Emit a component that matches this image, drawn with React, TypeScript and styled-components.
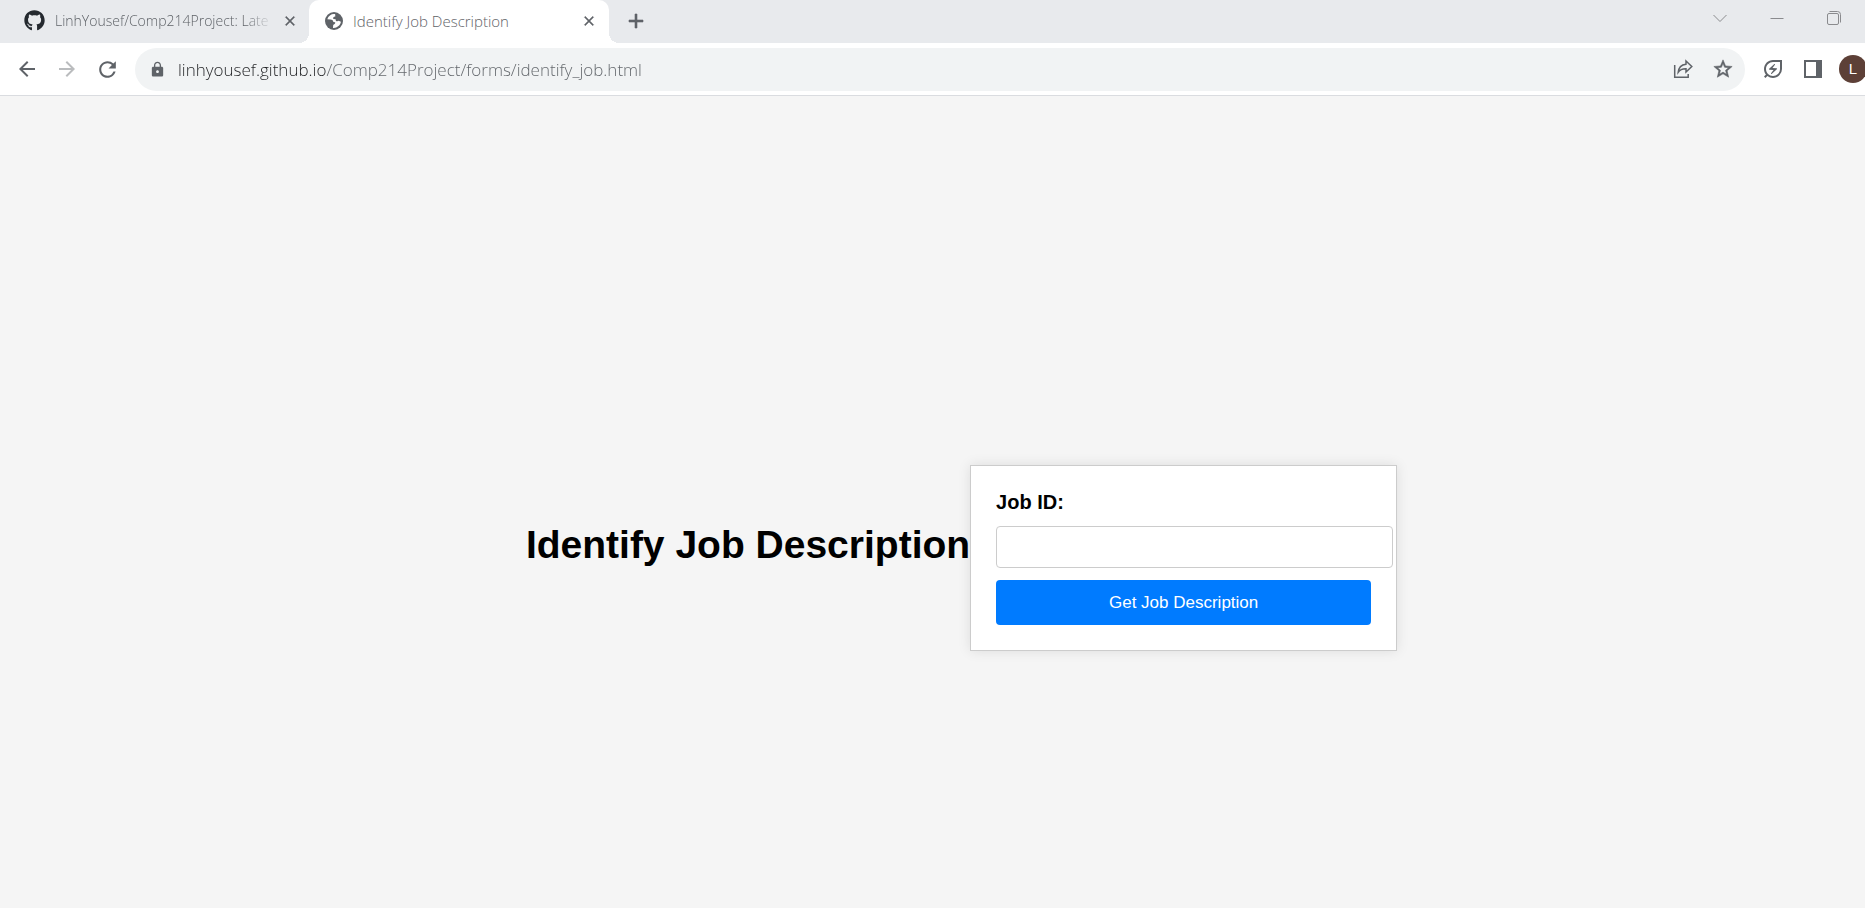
import React, { useState } from "react";
import styled, { createGlobalStyle } from "styled-components";
import {
  MdAdd,
  MdArrowBack,
  MdArrowForward,
  MdClose,
  MdLock,
  MdOutlineEnergySavingsLeaf,
  MdRefresh,
  MdStarBorder,
} from "react-icons/md";
import { FaGithub } from "react-icons/fa";

const GlobalStyle = createGlobalStyle`
  *, *::before, *::after { box-sizing: border-box; }
  body {
    margin: 0;
    background: #f5f5f5;
    font-family: "Liberation Sans", Arial, sans-serif;
  }
  svg { display: block; flex: none; }
`;

const Window = styled.div`
  display: flex;
  flex-direction: column;
  min-height: 100vh;
  overflow: hidden;
`;

const TabStrip = styled.div`
  display: flex;
  height: 43px;
  background: #e8eaed;
  color: #5f6368;
`;

const Tab = styled.div<{ $active?: boolean }>`
  position: relative;
  display: flex;
  align-items: center;
  width: ${(p) => (p.$active ? 300 : 309)}px;
  padding: 0 ${(p) => (p.$active ? "12px 2px 16px" : "11px 2px 24px")};
  border-radius: 10px 10px 0 0;
  background: ${(p) => (p.$active ? "#fff" : "transparent")};

  &::before,
  &::after {
    content: "";
    display: ${(p) => (p.$active ? "block" : "none")};
    position: absolute;
    bottom: 0;
    width: 10px;
    height: 10px;
  }
  &::before {
    left: -10px;
    background: radial-gradient(circle at 0 0, transparent 10px, #fff 10px);
  }
  &::after {
    right: -10px;
    background: radial-gradient(circle at 100% 0, transparent 10px, #fff 10px);
  }
`;

const TabTitle = styled.span<{ $faded?: boolean }>`
  flex: 1;
  min-width: 0;
  margin: 0 8px 0 10px;
  overflow: hidden;
  white-space: nowrap;
  font: 300 ${(p) => (p.$faded ? 14 : 15)}px/20px "Open Sans", sans-serif;
  mask-image: ${(p) =>
    p.$faded ? "linear-gradient(90deg, #000 calc(100% - 30px), transparent)" : "none"};
`;

const IconButton = styled.button<{ $size?: number; $bold?: boolean }>`
  display: flex;
  flex: none;
  align-items: center;
  justify-content: center;
  width: ${(p) => p.$size ?? 32}px;
  height: ${(p) => p.$size ?? 32}px;
  padding: 0;
  border: 0;
  border-radius: 50%;
  background: transparent;
  color: #5f6368;

  &:disabled {
    color: #babcbe;
  }

  svg {
    stroke-width: ${(p) => (p.$bold ? "0.6" : "0")};
  }
  svg[fill="currentColor"] path[fill="none"] {
    stroke: none;
  }
`;

const NewTab = styled(IconButton)`
  margin: 7px 0 0 13px;
`;

const WindowControls = styled.div`
  display: flex;
  gap: 25px;
  margin: 2px 15px 0 auto;

  svg {
    stroke-width: 1;
  }
`;

const Toolbar = styled.div`
  display: flex;
  align-items: center;
  height: 53px;
  padding-left: 11px;
  border-bottom: 1px solid #dadce0;
  background: #fff;
`;

const NavButtons = styled.nav`
  display: flex;
  gap: 8px;
  margin-right: 12px;
`;

const AddressBar = styled.div`
  display: flex;
  flex: 1;
  align-items: center;
  gap: 8px;
  height: 43px;
  padding: 0 6px 0 14px;
  border-radius: 22px;
  background: #f1f3f4;
  color: #5f6368;
`;

const AddressInput = styled.input`
  flex: 1;
  min-width: 0;
  height: 32px;
  margin-left: 4px;
  padding: 0;
  border: 0;
  outline: 0;
  background: linear-gradient(90deg, #202124 148px, #5f6368 148px);
  background-clip: text;
  color: #202124;
  -webkit-text-fill-color: transparent;
  font: 300 17px/24px "Open Sans", sans-serif;
`;

const Extras = styled.div`
  display: flex;
  align-items: center;
  gap: 8px;
  width: 120px;
  padding-left: 12px;
  overflow: hidden;
`;

const Avatar = styled.button`
  flex: none;
  width: 28px;
  height: 28px;
  margin-left: 2px;
  padding: 0;
  border: 0;
  border-radius: 50%;
  background: #5d4037;
  color: #fff;
  font: 15px/28px "Liberation Sans", Arial, sans-serif;
`;

const Page = styled.main`
  display: flex;
  flex: 1;
  align-items: center;
  justify-content: center;
  padding: 86px 0 0 58px;
`;

const Title = styled.h1`
  margin: 0;
  color: #000;
  font-size: 39px;
  line-height: 46px;
  white-space: nowrap;
`;

const JobForm = styled.form`
  width: 427px;
  margin-top: 25px;
  padding: 25px;
  border: 1px solid #ccc;
  background: #fff;
  box-shadow: 0 0 12px rgba(0, 0, 0, 0.1);
`;

const JobLabel = styled.label`
  display: block;
  margin-bottom: 12px;
  color: #000;
  font-size: 20px;
  font-weight: 700;
  line-height: 23px;
`;

const JobInput = styled.input`
  display: block;
  width: 397px;
  height: 42px;
  margin-bottom: 12px;
  padding: 10px;
  border: 1px solid #ccc;
  border-radius: 4px;
  background: #fff;
  font-size: 17px;
`;

const SubmitButton = styled.button`
  display: block;
  width: 100%;
  padding: 12px;
  border: 0;
  border-radius: 4px;
  background: #007bff;
  color: #fff;
  font: 17px/21px "Liberation Sans", Arial, sans-serif;
`;

const GlobeIcon = () => (
  <svg width="18" height="18" viewBox="0 0 18 18" aria-hidden="true">
    <circle cx="9" cy="9" r="9" fill="#5f6368" />
    <path
      d="M10.2 2.2C7 1.500 3.400 3.600 2.300 7.200L5.500 7.600C7.200 7.700 8.400 8.700 8.300 10.100L10.200 10.300C10.700 12 8.800 12.400 8.200 13L8 15.900C11.800 16.300 15.400 13.400 15.900 9.800L13.700 8.700 12.300 9.300C10.900 9.300 10.500 8.200 10.700 7.200L8.500 7C7.400 5.500 9.200 4.800 10.300 4.600Z"
      fill="#fff"
    />
  </svg>
);

const ShareIcon = () => (
  <svg width="20" height="20" viewBox="0 0 20 20" fill="none" stroke="currentColor" aria-hidden="true">
    <g strokeWidth="1.500">
      <path d="M1.700 6V18.200H15.200V15" />
      <path d="M13 2L18.800 7.500L13 13V9.800C9.500 9.700 7 10.700 5.200 13.300C5.600 9 8.400 5.700 13 5.200Z" />
    </g>
  </svg>
);

const SidePanelIcon = () => (
  <svg width="18" height="18" viewBox="0 0 18 18" aria-hidden="true">
    <path d="M0 0H18V18H0ZM2 2V16H12V2Z" fill="currentColor" fillRule="evenodd" />
  </svg>
);

const ChevronIcon = () => (
  <svg width="14" height="14" viewBox="0 0 14 14" fill="none" stroke="#8a8b8e" aria-hidden="true">
    <path d="M.5 4L7 10.500L13.500 4" />
  </svg>
);

const MinimizeIcon = () => (
  <svg width="14" height="14" viewBox="0 0 14 14" fill="none" stroke="#8a8b8e" aria-hidden="true">
    <path d="M.5 7.500H13.500" />
  </svg>
);

const RestoreIcon = () => (
  <svg width="14" height="14" viewBox="0 0 14 14" fill="none" stroke="#8a8b8e" aria-hidden="true">
    <rect x=".5" y="2.500" width="11" height="11" rx="1.500" />
    <path d="M2.500 .5H10.500Q13.500 .5 13.500 3.500V11.500" />
  </svg>
);

export default function App() {
  const [url, setUrl] = useState("linhyousef.github.io/Comp214Project/forms/identify_job.html");
  const [jobId, setJobId] = useState("");

  return (
    <Window>
      <GlobalStyle />
      <TabStrip>
        <Tab>
          <FaGithub size={21} color="#24292f" />
          <TabTitle $faded>LinhYousef/Comp214Project: Late</TabTitle>
          <IconButton $size={16} $bold aria-label="Close tab">
            <MdClose size={16} />
          </IconButton>
        </Tab>
        <Tab $active>
          <GlobeIcon />
          <TabTitle>Identify Job Description</TabTitle>
          <IconButton $size={16} $bold aria-label="Close tab">
            <MdClose size={16} />
          </IconButton>
        </Tab>
        <NewTab $size={28} $bold aria-label="New tab">
          <MdAdd size={24} />
        </NewTab>
        <WindowControls>
          <IconButton aria-label="Search tabs">
            <ChevronIcon />
          </IconButton>
          <IconButton aria-label="Minimize">
            <MinimizeIcon />
          </IconButton>
          <IconButton aria-label="Restore">
            <RestoreIcon />
          </IconButton>
        </WindowControls>
      </TabStrip>

      <Toolbar>
        <NavButtons>
          <IconButton aria-label="Back">
            <MdArrowBack size={24} />
          </IconButton>
          <IconButton aria-label="Forward" disabled>
            <MdArrowForward size={24} />
          </IconButton>
          <IconButton aria-label="Reload">
            <MdRefresh size={25} />
          </IconButton>
        </NavButtons>
        <AddressBar>
          <MdLock size={17} />
          <AddressInput aria-label="Address" value={url} onChange={(e) => setUrl(e.target.value)} />
          <IconButton aria-label="Share this page">
            <ShareIcon />
          </IconButton>
          <IconButton $bold aria-label="Bookmark this page">
            <MdStarBorder size={22} />
          </IconButton>
        </AddressBar>
        <Extras>
          <IconButton aria-label="Energy saver">
            <MdOutlineEnergySavingsLeaf size={24} />
          </IconButton>
          <IconButton aria-label="Side panel">
            <SidePanelIcon />
          </IconButton>
          <Avatar aria-label="Profile L">L</Avatar>
        </Extras>
      </Toolbar>

      <Page>
        <Title>Identify Job Description</Title>
        <JobForm onSubmit={(e) => e.preventDefault()}>
          <JobLabel htmlFor="job-id">Job ID:</JobLabel>
          <JobInput id="job-id" type="text" value={jobId} onChange={(e) => setJobId(e.target.value)} />
          <SubmitButton type="submit">Get Job Description</SubmitButton>
        </JobForm>
      </Page>
    </Window>
  );
}
